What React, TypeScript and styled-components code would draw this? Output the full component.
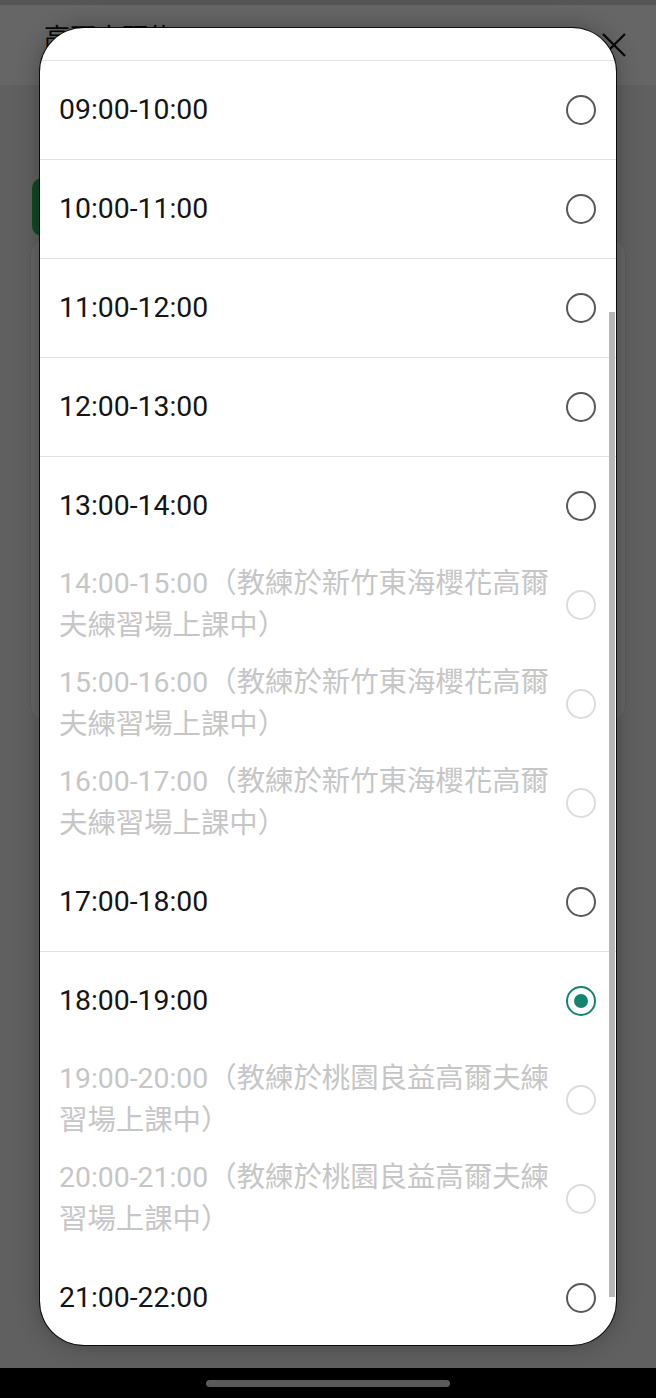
import React from "react";
import styled, { createGlobalStyle } from "styled-components";

const GlobalStyle = createGlobalStyle`
  html, body { margin: 0; padding: 0; }
  body {
    font-family: Roboto, "Noto Sans CJK TC", "Noto Sans", sans-serif;
    background: #000;
  }
  * { box-sizing: border-box; }
`;

const Page = styled.div`
  position: relative;
  width: 656px;
  height: 1398px;
  overflow: hidden;
  background: #f1f1f1;
  display: flex;
  flex-direction: column;
`;

const StatusStrip = styled.div`
  height: 5px;
  background: #d4d4d4;
  flex-shrink: 0;
`;

const Header = styled.header`
  height: 80px;
  background: #ffffff;
  display: flex;
  align-items: flex-start;
  justify-content: space-between;
  padding: 14px 30px 0 44px;
  flex-shrink: 0;
`;

const Title = styled.h1`
  margin: 0;
  font-size: 26px;
  font-weight: 400;
  line-height: 34px;
  color: #111;
  font-family: "Noto Sans CJK TC", sans-serif;
`;

const CloseButton = styled.button`
  width: 24px;
  height: 24px;
  margin-top: 14px;
  padding: 0;
  border: 0;
  background: transparent;
  display: flex;
`;

const Body = styled.main`
  display: flex;
  flex-direction: column;
  align-items: flex-start;
  gap: 4px;
  padding: 93px 30px 0 30px;
`;

const GreenButton = styled.div`
  margin-left: 2px;
  width: 240px;
  height: 58px;
  border-radius: 10px;
  background: #27b85a;
`;

const Card = styled.section`
  align-self: stretch;
  height: 480px;
  border-radius: 14px;
  background: #ffffff;
  border: 1px solid #e4e4e4;
`;

const Overlay = styled.div`
  position: absolute;
  inset: 0;
  background: rgba(0, 0, 0, 0.6);
`;

const Modal = styled.div`
  position: absolute;
  top: 28px;
  left: 40px;
  width: 576px;
  height: 1317px;
  border-radius: 44px;
  background: #ffffff;
  overflow: hidden;
  box-shadow: 0 0 0 1px rgba(0, 0, 0, 0.85), 0 0 24px rgba(0, 0, 0, 0.3);
  display: flex;
  flex-direction: column;
`;

const ListTop = styled.div`
  height: 33px;
  flex-shrink: 0;
  border-bottom: 1px solid #e2e2e2;
`;

const List = styled.ul`
  list-style: none;
  margin: 0;
  padding: 0;
  display: flex;
  flex-direction: column;
`;

const Row = styled.li<{ $divider: boolean }>`
  height: 99px;
  flex-shrink: 0;
  display: flex;
  align-items: center;
  gap: 10px;
  padding: 0 20px 0 19px;
  border-bottom: 1px solid ${(p) => (p.$divider ? "#e2e2e2" : "transparent")};
`;

const Label = styled.span<{ $disabled: boolean }>`
  flex: 1;
  font-size: 28.4px;
  line-height: 42px;
  color: ${(p) => (p.$disabled ? "#c6c6c6" : "#151515")};
  font-family: Roboto, "Noto Sans CJK TC", sans-serif;
`;

const Radio = styled.span<{ $state: "off" | "on" | "disabled" }>`
  position: relative;
  width: 30px;
  height: 30px;
  flex-shrink: 0;
  border-radius: 50%;
  border: 2.7px solid
    ${(p) =>
      p.$state === "on" ? "#148471" : p.$state === "disabled" ? "#dcdcdc" : "#585858"};
  &::after {
    content: "";
    display: ${(p) => (p.$state === "on" ? "block" : "none")};
    position: absolute;
    left: 50%;
    top: 50%;
    width: 14px;
    height: 14px;
    margin: -7px 0 0 -7px;
    border-radius: 50%;
    background: #148471;
  }
`;

const ScrollThumb = styled.div`
  position: absolute;
  right: 1px;
  top: 284px;
  width: 6px;
  height: 985px;
  background: #b7b7b7;
`;

const NavBar = styled.div`
  position: absolute;
  left: 0;
  right: 0;
  bottom: 0;
  height: 30px;
  background: #000;
  display: flex;
  justify-content: center;
  padding-top: 12px;
`;

const Handle = styled.div`
  width: 244px;
  height: 7px;
  border-radius: 4px;
  background: #5a5a5a;
`;

type Slot = { label: string; disabled?: boolean };

const slots: Slot[] = [
  { label: "09:00-10:00" },
  { label: "10:00-11:00" },
  { label: "11:00-12:00" },
  { label: "12:00-13:00" },
  { label: "13:00-14:00" },
  { label: "14:00-15:00（教練於新竹東海櫻花高爾夫練習場上課中）", disabled: true },
  { label: "15:00-16:00（教練於新竹東海櫻花高爾夫練習場上課中）", disabled: true },
  { label: "16:00-17:00（教練於新竹東海櫻花高爾夫練習場上課中）", disabled: true },
  { label: "17:00-18:00" },
  { label: "18:00-19:00" },
  { label: "19:00-20:00（教練於桃園良益高爾夫練習場上課中）", disabled: true },
  { label: "20:00-21:00（教練於桃園良益高爾夫練習場上課中）", disabled: true },
  { label: "21:00-22:00" },
];

const selected = "18:00-19:00";

export default function App() {
  return (
    <>
      <GlobalStyle />
      <Page>
        <StatusStrip />
        <Header>
          <Title>高爾夫預約</Title>
          <CloseButton aria-label="close">
            <svg width="24" height="24" viewBox="0 0 24 24">
              <path d="M1 1 L23 23 M23 1 L1 23" stroke="#111" strokeWidth="2.2" />
            </svg>
          </CloseButton>
        </Header>
        <Body>
          <GreenButton />
          <Card />
        </Body>
        <Overlay />
        <Modal>
          <ListTop />
          <List>
            {slots.map((s, i) => {
              const next = slots[i + 1];
              const divider =
                !s.disabled && !!next && !next.disabled && s.label !== selected;
              const state = s.disabled ? "disabled" : s.label === selected ? "on" : "off";
              return (
                <Row key={s.label} $divider={divider}>
                  <Label $disabled={!!s.disabled}>{s.label}</Label>
                  <Radio $state={state} />
                </Row>
              );
            })}
          </List>
          <ScrollThumb />
        </Modal>
        <NavBar>
          <Handle />
        </NavBar>
      </Page>
    </>
  );
}
